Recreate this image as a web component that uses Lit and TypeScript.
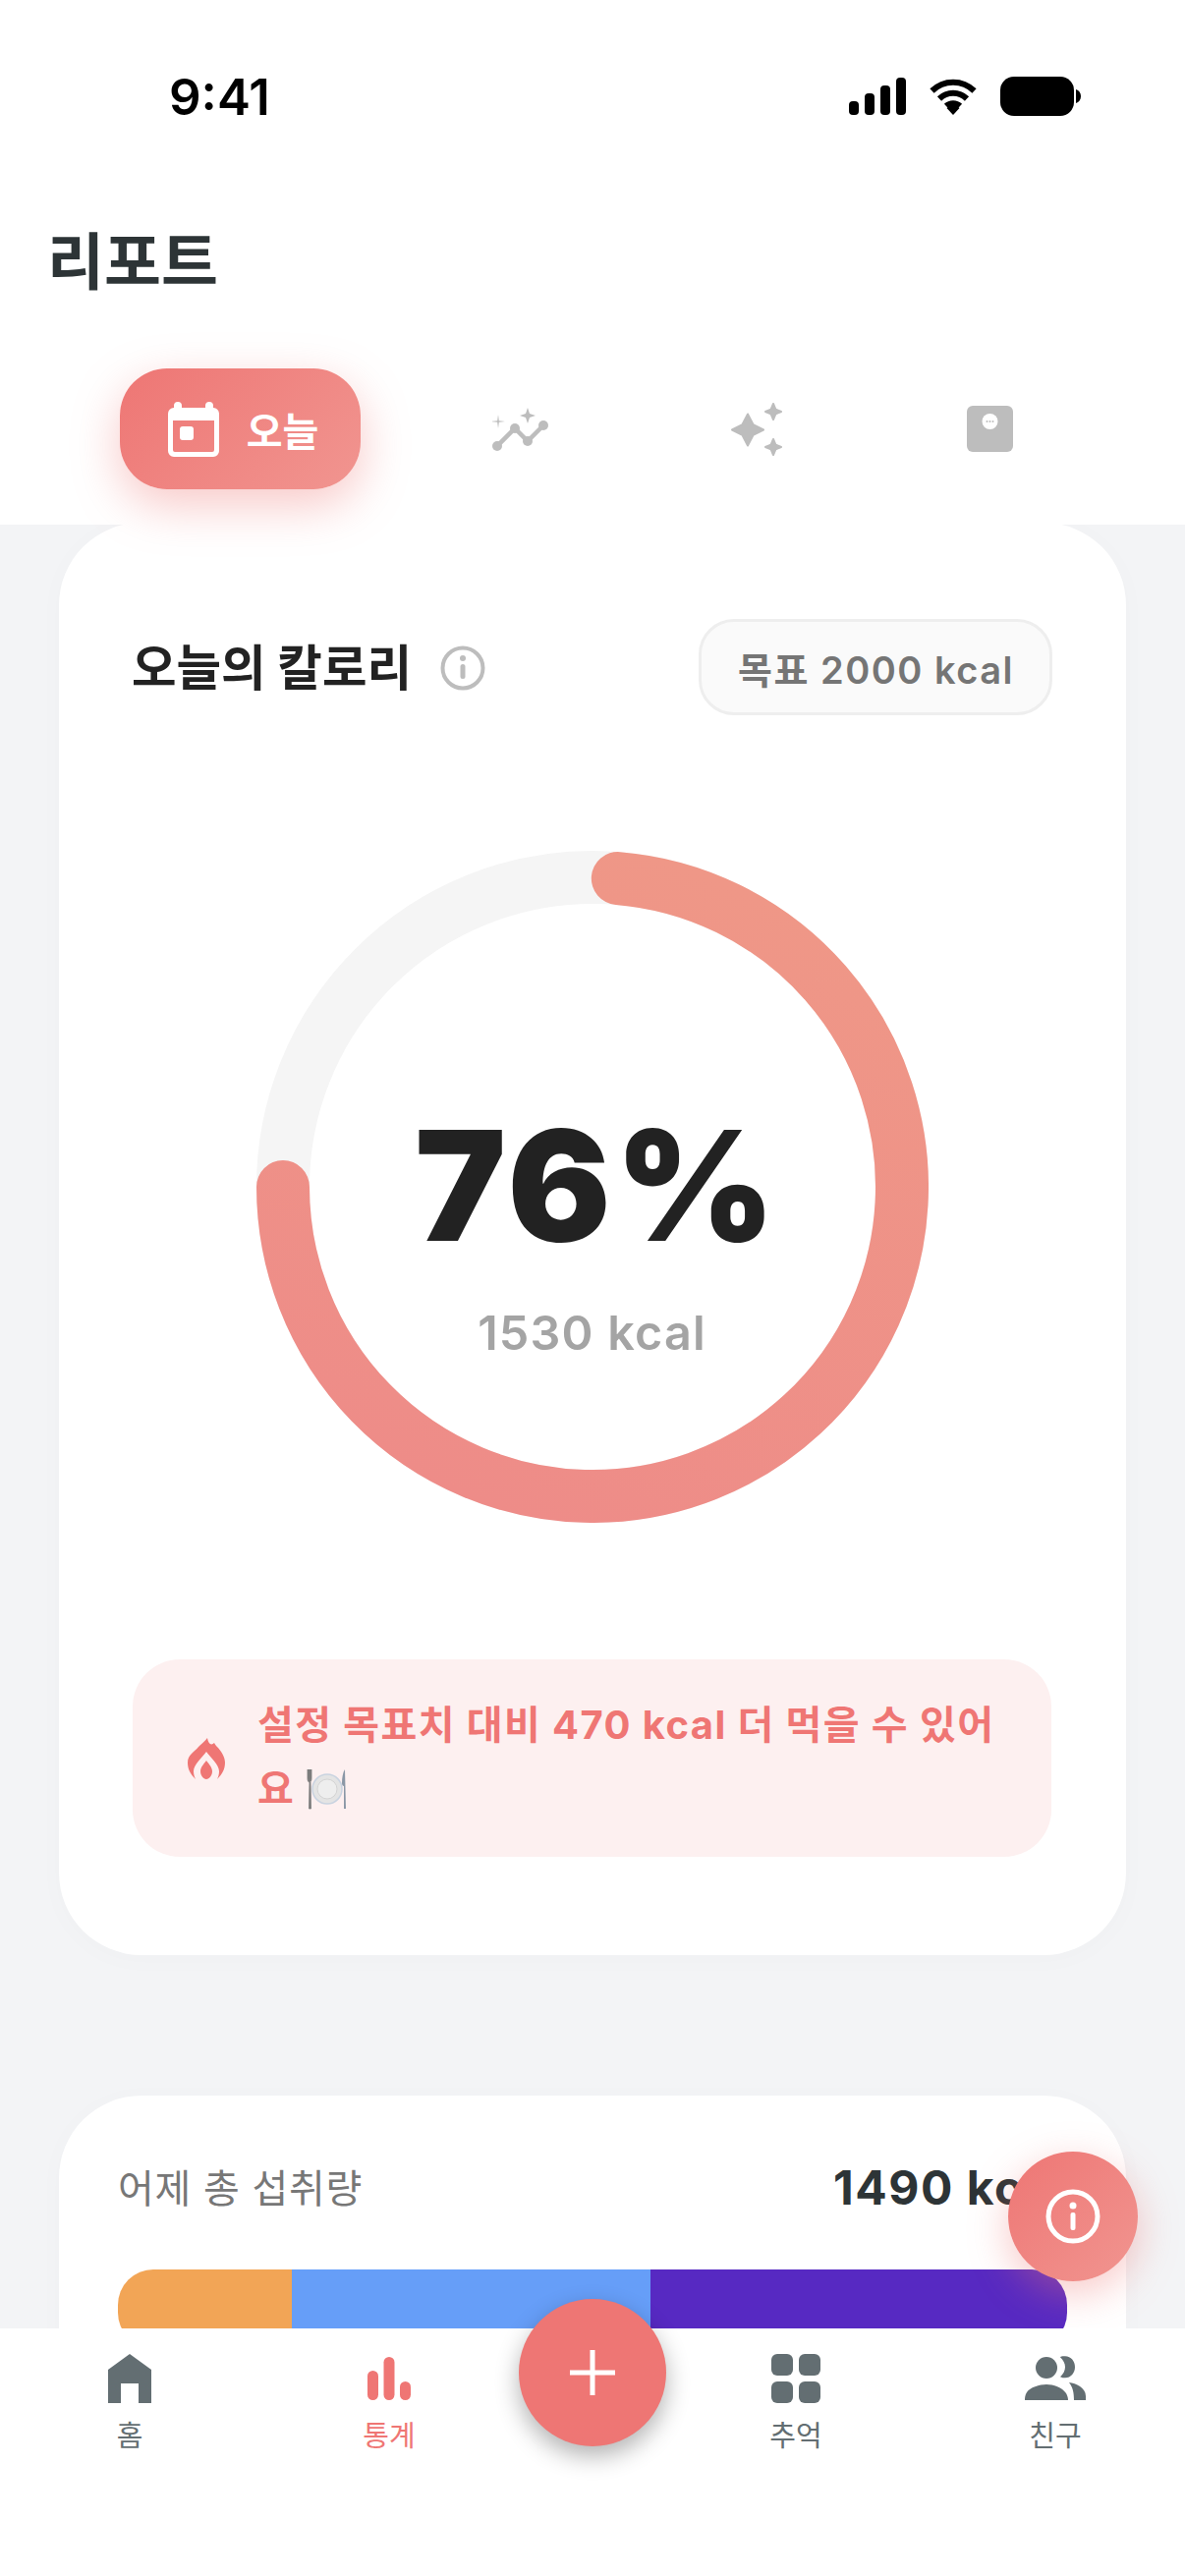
import { LitElement, html, css, svg } from "lit";
import { customElement } from "lit/decorators.js";

const arc = (deg: number, r = 315, c = 342) => {
  const a = ((deg - 90) * Math.PI) / 180;
  return `${c + r * Math.cos(a)} ${c + r * Math.sin(a)}`;
};

const star = (cx: number, cy: number, r: number, k = 0.3) => {
  const s = k * r;
  return `M${cx} ${cy - r}L${cx + s} ${cy - s}L${cx + r} ${cy}L${cx + s} ${cy + s}L${cx} ${cy + r}L${cx - s} ${cy + s}L${cx - r} ${cy}L${cx - s} ${cy - s}Z`;
};

@customElement("app-root")
export class AppRoot extends LitElement {
  static styles = css`
    :host { display: block; width: 1206px; height: 2622px; font-family: Inter, "Noto Sans CJK KR", sans-serif; }
    .screen { position: relative; width: 1206px; height: 2622px; overflow: hidden; background: #f3f4f6; display: flex; flex-direction: column; }
    .top { position: relative; z-index: 1; background: #fff; height: 534px; flex: none; display: flex; flex-direction: column; }
    .status { height: 196px; flex: none; display: flex; align-items: center; justify-content: space-between; padding: 0 106px 0 172px; box-sizing: border-box; }
    .time { font-size: 51px; font-weight: 600; color: #000; line-height: 1; }
    .sys { display: flex; align-items: center; gap: 23px; }
    h1 { margin: 0; padding: 30px 48px 0; font-size: 63px; font-weight: 700; line-height: 80px; color: #2d3436; height: 98px; }
    .tabs { display: flex; align-items: center; padding-left: 122px; margin-top: 51px; height: 123px; }
    .tab-on { width: 245px; height: 123px; box-sizing: border-box; padding-left: 6px; border-radius: 48px; background: linear-gradient(135deg, #ee7674, #f19590); box-shadow: 0 16px 48px rgba(238, 118, 116, 0.4); display: flex; align-items: center; justify-content: center; gap: 28px; color: #fff; font-size: 40px; font-weight: 600; }
    .t2 { margin-left: 134px; }
    .t3 { margin-left: 186px; }
    .t4 { margin-left: 188px; }
    .scroll { flex: 1; padding: 0 60px; margin-top: -2px; position: relative; min-height: 0; }
    .card { background: #fff; border-radius: 84px; box-sizing: border-box; box-shadow: 0 4px 30px rgba(0, 0, 0, 0.02); }
    .main { height: 1458px; padding: 98px 76px 0 75px; display: flex; flex-direction: column; }
    .head { display: flex; align-items: center; justify-content: space-between; height: 98px; }
    .ttl { display: flex; align-items: center; gap: 29px; margin-left: -1px; font-size: 49.500px; font-weight: 700; color: #222; }
    .ttl span { padding-bottom: 5px; }
    .ttl svg { margin-top: 2px; }
    .chip { height: 98px; box-sizing: border-box; padding: 0 36px 0 37px; margin-right: -1px; border-radius: 36px; border: 3px solid #eeeeee; background: #fafafa; display: flex; align-items: center; font-size: 38px; font-weight: 600; color: #757575; letter-spacing: 1.5px; }
    .ring { position: relative; width: 684px; height: 684px; margin: 138px auto 0; display: block; }
    .ring svg { display: block; }
    .center { position: absolute; left: 0; right: 0; top: 246px; text-align: center; }
    .pct { font-size: 156px; font-weight: 900; color: #222; line-height: 190px; letter-spacing: 4px; padding-left: 10px; }
    .kcal { font-size: 48.500px; font-weight: 600; color: #a4a4a4; line-height: 60px; letter-spacing: 1.2px; margin-top: 25px; }
    .note { margin-top: 139px; height: 201px; box-sizing: border-box; border-radius: 48px; background: #fdf0f0; display: flex; align-items: center; padding: 0 50px 3px 56px; gap: 33px; }
    .note svg:first-child { margin-top: 3px; }
    .note-text { font-size: 40px; font-weight: 700; line-height: 65px; color: #ef7674; letter-spacing: 1.4px; }
    .plate { vertical-align: -8px; margin-left: 0; }
    .second { margin-top: 143px; height: 700px; padding: 56px 60px 0; }
    .row { display: flex; justify-content: space-between; align-items: center; height: 72px; white-space: nowrap; }
    .lbl { font-size: 40px; color: #777; font-weight: 400; letter-spacing: 0.700px; }
    .val { font-size: 48px; font-weight: 700; color: #2d3436; letter-spacing: 1.5px; margin-top: 3px; }
    .bar { margin-top: 49px; height: 80px; border-radius: 36px; overflow: hidden; display: flex; }
    .bar i { display: block; height: 100%; }
    .nav { flex: none; position: relative; z-index: 2; height: 252px; background: #fff; display: grid; grid-template-columns: 264px 264px 150px 264px 264px; padding-top: 26px; box-sizing: border-box; }
    .it { display: flex; flex-direction: column; align-items: center; color: #636e72; font-size: 29px; gap: 14px; line-height: 40px; }
    .it svg { display: block; }
    .it.on { color: #ef7674; }
    .fab { position: absolute; border-radius: 50%; display: flex; align-items: center; justify-content: center; }
    .plus { z-index: 3; left: 528px; top: 2340px; width: 150px; height: 150px; background: #ee7674; box-shadow: 0 10px 24px rgba(0, 0, 0, 0.3); }
    .inf { z-index: 1; left: 1026px; top: 2190px; width: 132px; height: 132px; background: linear-gradient(135deg, #ee7674, #f19590); box-shadow: 0 12px 40px rgba(238, 118, 116, 0.4); }
  `;

  render() {
    const start = 4.7, end = 270;
    return html`<div class="screen">
      <div class="top">
        <div class="status">
          <span class="time">9:41</span>
          <div class="sys">
            <svg width="58" height="38" viewBox="0 0 58 38"><g fill="#000"><rect x="0" y="24" width="10" height="14" rx="4"/><rect x="16" y="16" width="10" height="22" rx="4"/><rect x="32" y="8" width="10" height="30" rx="4"/><rect x="48" y="0" width="10" height="38" rx="4"/></g></svg>
            <svg width="50" height="38" viewBox="0 0 50 38"><path d="M3.500 13.500a30.500 30.500 0 0 1 43 0M11 21.500a20 20 0 0 1 28 0M18 29a10 10 0 0 1 14 0" fill="none" stroke="#000" stroke-width="6"/><path d="M25 38l-6.500-7a9 9 0 0 1 13 0z" fill="#000"/></svg>
            <svg width="82" height="40" viewBox="0 0 82 40"><rect width="75" height="40" rx="14" fill="#000"/><path d="M77 13c3 1 5 3.500 5 7s-2 6-5 7z" fill="#000"/></svg>
          </div>
        </div>
        <h1>리포트</h1>
        <div class="tabs">
          <div class="tab-on">
            <svg width="52" height="56" viewBox="0 0 52 56"><path d="M10 0a4 4 0 0 1 4 4v2h24V4a4 4 0 0 1 8 0v2.100A6 6 0 0 1 52 12v38a6 6 0 0 1-6 6H6a6 6 0 0 1-6-6V12a6 6 0 0 1 6-6V4a4 4 0 0 1 4-4zM5 19v30a2 2 0 0 0 2 2h38a2 2 0 0 0 2-2V19z" fill="#fff" fill-rule="evenodd"/><rect x="12" y="25" width="14" height="14" rx="3" fill="#fff"/></svg>
            <span>오늘</span>
          </div>
          <svg class="t2" width="57" height="44" viewBox="0 0 57 44"><g fill="#bdbdbd"><path d="${star(6, 14, 7, 0.12)}"/><path d="${star(36, 8, 8, 0.25)}"/><circle cx="5" cy="39" r="5"/><circle cx="23" cy="21" r="5"/><circle cx="36" cy="34" r="5"/><circle cx="52" cy="18" r="5"/></g><path d="M5 39L23 21L36 34L52 18" fill="none" stroke="#bdbdbd" stroke-width="4.500"/></svg>
          <svg class="t3" width="52" height="54" viewBox="0 0 52 54"><g fill="#bdbdbd" stroke="#bdbdbd" stroke-width="2" stroke-linejoin="round"><path d="${star(17, 27.5, 16, 0.34)}"/><path d="${star(43, 9, 8, 0.3)}"/><path d="${star(43, 45, 8, 0.3)}"/></g></svg>
          <svg class="t4" width="47" height="47" viewBox="0 0 47 47"><rect width="47" height="47" rx="6" fill="#bdbdbd"/><circle cx="23.500" cy="16" r="8" fill="#fff"/><g fill="#bdbdbd"><circle cx="20.500" cy="16" r="1"/><circle cx="23.500" cy="16" r="1"/><circle cx="26.500" cy="16" r="1"/></g></svg>
        </div>
      </div>
      <div class="scroll">
        <div class="card main">
          <div class="head">
            <div class="ttl"><span>오늘의 칼로리</span>
              <svg width="46" height="46" viewBox="0 0 46 46"><circle cx="23" cy="23" r="20.500" fill="none" stroke="#bdbdbd" stroke-width="4"/><circle cx="23" cy="13" r="3" fill="#bdbdbd"/><rect x="20.500" y="19" width="5" height="15" rx="2.500" fill="#bdbdbd"/></svg>
            </div>
            <div class="chip">목표 2000 kcal</div>
          </div>
          <div class="ring">
            <svg width="684" height="684" viewBox="0 0 684 684">
              <defs><linearGradient id="g" x1="0.700" y1="0" x2="0.300" y2="1"><stop offset="0" stop-color="#ef9787"/><stop offset="1" stop-color="#ee8c88"/></linearGradient></defs>
              <circle cx="342" cy="342" r="315" fill="none" stroke="#f5f5f5" stroke-width="54"/>
              ${svg`<path d="M${arc(start)} A315 315 0 1 1 ${arc(end)}" fill="none" stroke="url(#g)" stroke-width="54" stroke-linecap="round"/>`}
            </svg>
            <div class="center">
              <div class="pct">76%</div>
              <div class="kcal">1530 kcal</div>
            </div>
          </div>
          <div class="note">
            <svg width="38" height="42" viewBox="0 0 38 42" style="flex:none"><path fill-rule="evenodd" d="M20 0c1 6 4 8 7 5 1 2 2 3 4 5 5 6 7 11 7 15 0 7-3 12-8 17 1-2 2-5 2-8 0-7-8-13-13-20-5 7-13 13-13 20 0 3 1 6 2 8C3 37 0 32 0 25 0 17 7 14 12 8c3-3 6-5 8-8z" fill="#ef7674"/><path d="M19 23c-3 4-6 7-6 11 0 4 3 8 6 8s6-4 6-8c0-4-3-7-6-11z" fill="#ef7674"/></svg>
            <div class="note-text">설정 목표치 대비 470 kcal 더 먹을 수 있어요 <svg class="plate" width="44" height="44" viewBox="0 0 44 44"><circle cx="22" cy="22" r="15" fill="#e4e4e4" stroke="#c9d3e0" stroke-width="1.500"/><circle cx="22" cy="22" r="10" fill="#eeeeee" stroke="#d4d4d4"/><path d="M4 2v12M2 2v9c0 3 1 4 2 4s2-1 2-4V2M4 15l-.500 27h2L5 15" fill="#7c7c7c" stroke="#7c7c7c" stroke-width=".8"/><path d="M40 2c-2 3-3 8-3 14 0 2 1 3 2 3v23h2z" fill="#8a97a6"/></svg></div>
          </div>
        </div>
        <div class="card second">
          <div class="row"><span class="lbl">어제 총 섭취량</span><span class="val">1490 kcal</span></div>
          <div class="bar">
            <i style="width:177px;background:#f2a556"></i>
            <i style="width:365px;background:#669ef8"></i>
            <i style="flex:1;background:#5729c2"></i>
          </div>
        </div>
      </div>
      <div class="fab inf"><svg width="56" height="56" viewBox="0 0 56 56"><circle cx="28" cy="28" r="25" fill="none" stroke="#fff" stroke-width="5"/><circle cx="28" cy="17" r="3.500" fill="#fff"/><rect x="25.500" y="24" width="5" height="18" rx="2" fill="#fff"/></svg></div>
      <nav class="nav">
        <div class="it"><svg width="44" height="50" viewBox="0 0 44 50"><path d="M22 0L44 16V50H31V30H13V50H0V16z" fill="#636e72"/></svg><span>홈</span></div>
        <div class="it on"><svg width="44" height="50" viewBox="0 0 44 50"><g fill="#ef7674"><rect x="0" y="17" width="11" height="30" rx="5.500"/><rect x="16.500" y="3" width="11" height="44" rx="5.500"/><rect x="33" y="28" width="11" height="19" rx="5.500"/></g></svg><span>통계</span></div>
        <div></div>
        <div class="it"><svg width="50" height="50" viewBox="0 0 50 50"><g fill="#636e72"><rect width="22" height="22" rx="6"/><rect x="28" width="22" height="22" rx="6"/><rect y="28" width="22" height="22" rx="6"/><rect x="28" y="28" width="22" height="22" rx="6"/></g></svg><span>추억</span></div>
        <div class="it"><svg width="62" height="50" viewBox="0 0 62 50"><g fill="#636e72"><circle cx="22" cy="14" r="11"/><path d="M0 47c0-2 0-5 2-8 3-5 13-8 20-8s16 3 20 9c1 2 2 4 2 7z"/><path d="M36 3c2-.700 3-.700 5-.700 6 0 10 5 10 11s-4 11-10 11c-2 0-3 0-5-1 3-3 5-6 5-10s-2-7-5-10z"/><path d="M45 29c7 1 17 5 17 14v4H50c0-7-1-13-5-18z"/></g></svg><span>친구</span></div>
      </nav>
      <div class="fab plus"><svg width="46" height="46" viewBox="0 0 46 46"><path d="M23 0v46M0 23h46" stroke="#fff" stroke-width="5"/></svg></div>
    </div>`;
  }
}
